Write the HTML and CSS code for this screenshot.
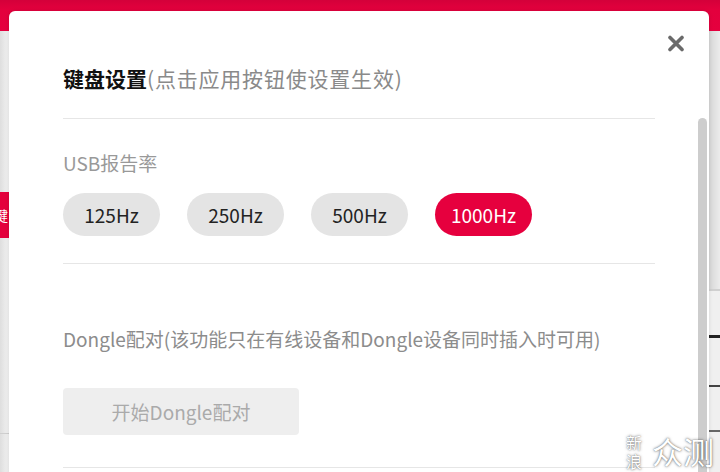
FILE: index.html
```html
<!DOCTYPE html>
<html lang="zh-CN">
<head>
    <meta charset="utf-8">
    <title>键盘设置</title>
    <link rel="stylesheet" href="styles.css">
</head>
<body>

<div class="page">
    <div class="topbar"></div>
    <div class="page-main">
        <div class="side-left">
            <div class="side-tab">键</div>
            <div class="side-line"></div>
        </div>
        <div class="page-center"></div>
        <div class="side-right">
            <div class="rs-block rs-a"></div>
            <div class="rs-block rs-b"></div>
            <div class="rs-block rs-c"></div>
            <div class="rs-block rs-d"></div>
        </div>
    </div>
</div>

<div class="modal">
    <div class="modal-body">
        <span class="close">
            <svg width="18" height="17" viewBox="0 0 18 17">
                <path d="M3 2.5 L15 14.5 M15 2.5 L3 14.5" stroke="#6a6a6a" stroke-width="3.6" stroke-linecap="round"/>
            </svg>
        </span>
        <h3 class="title">键盘设置<span class="sub">(点击应用按钮使设置生效)</span></h3>
        <div class="divider"></div>

        <div class="section rate">
            <div class="label">USB报告率</div>
            <div class="pills">
                <button class="pill">125Hz</button>
                <button class="pill">250Hz</button>
                <button class="pill">500Hz</button>
                <button class="pill active">1000Hz</button>
            </div>
        </div>
        <div class="divider"></div>

        <div class="section dongle">
            <div class="label">Dongle配对(该功能只在有线设备和Dongle设备同时插入时可用)</div>
            <button class="pair-btn" disabled>开始Dongle配对</button>
        </div>
        <div class="divider"></div>
    </div>
    <div class="scroll-track">
        <div class="scroll-thumb"></div>
    </div>
</div>

<div class="watermark">
    <div class="wm-small"><span>新</span><span>浪</span></div>
    <span class="wm-big">众测</span>
</div>

</body>
</html>
```

FILE: styles.css
```css
body {
    margin: 0;
    font-family: "Noto Sans CJK SC", "Noto Sans", sans-serif;
    background-color: #f4f4f4;
    width: 720px;
    height: 472px;
    overflow: hidden;
    position: relative;
}
.page {
    display: flex;
    flex-direction: column;
    height: 472px;
}
.topbar {
    height: 34px;
    background: linear-gradient(#d4003a, #e3003d 30%, #e5003e);
}
.page-main {
    flex: 1;
    display: flex;
}
.side-left {
    width: 9px;
    background: linear-gradient(90deg, #dedede, #f3f3f3);
    padding-top: 161px;
}
.side-tab {
    height: 46px;
    background-color: #e4003c;
    color: #fff;
    font-size: 14px;
    line-height: 46px;
    overflow: hidden;
    text-indent: -6px;
}
.side-line {
    margin-top: 195px;
    border-top: 1px solid #cfcfcf;
}
.page-center {
    flex: 1;
    background-color: #fff;
}
.side-right {
    width: 11px;
    background: linear-gradient(90deg, #d6d6d6, #ececec);
    padding-top: 258px;
}
.rs-block {
    border-top: 2px solid #9a9a9a;
    background-color: #f0f0f0;
}
.rs-a {
    height: 44px;
    border-top-color: #d0d0d0;
}
.rs-b {
    height: 47px;
    border-top: 3px solid #222;
}
.rs-c {
    height: 43px;
    border-top-color: #444;
}
.rs-d {
    height: 40px;
    border-top-color: #666;
}

.modal {
    position: absolute;
    left: 9px;
    top: 11px;
    width: 700px;
    height: 480px;
    background-color: #fff;
    border-radius: 6px 6px 0 0;
    box-shadow: 0 0 4px rgba(0, 0, 0, 0.12);
    display: flex;
}
.modal-body {
    flex: 1;
    padding: 52px 0 0 54px;
    position: relative;
}
.close {
    position: absolute;
    top: 24px;
    right: 13px;
    line-height: 0;
    cursor: pointer;
}
.title {
    margin: 0 0 25px;
    font-size: 21px;
    line-height: 30px;
    font-weight: bold;
    color: #111;
}
.sub {
    font-weight: normal;
    color: #8a8a8a;
    letter-spacing: 0.8px;
}
.divider {
    width: 592px;
    border-top: 1px solid #e6e6e6;
}
.label {
    font-size: 19px;
    line-height: 26px;
    color: #8c8c8c;
}
.rate {
    padding: 31px 0 27px;
}
.rate .label {
    color: #999;
}
.pills {
    display: flex;
    gap: 27px;
    margin-top: 17px;
}
.pill {
    width: 97px;
    height: 43px;
    border: none;
    border-radius: 22px;
    background-color: #e4e4e4;
    color: #222;
    font-family: inherit;
    font-size: 19px;
    padding: 0;
    cursor: pointer;
}
.pill.active {
    background-color: #e6003e;
    color: #fff;
}
.dongle {
    padding: 62px 0 32px;
}
.pair-btn {
    display: block;
    margin-top: 36px;
    width: 236px;
    height: 47px;
    border: none;
    border-radius: 4px;
    background-color: #eeeeee;
    color: #aaa;
    font-family: inherit;
    font-size: 19px;
    padding: 0;
}
.scroll-track {
    width: 9px;
    margin-right: 2px;
    padding-top: 107px;
    display: flex;
}
.scroll-thumb {
    flex: 1;
    background-color: #cdcdcd;
    border-radius: 5px 5px 0 0;
}

.watermark {
    position: absolute;
    left: 626px;
    top: 433px;
    display: flex;
    align-items: flex-start;
    gap: 10px;
    color: #fff;
    text-shadow: 0 0 3px rgba(0, 0, 0, 0.55), 0 0 1px rgba(0, 0, 0, 0.4);
}
.wm-small {
    display: flex;
    flex-direction: column;
    font-size: 16px;
    line-height: 19px;
}
.wm-big {
    font-size: 31px;
    line-height: 36px;
}
```
